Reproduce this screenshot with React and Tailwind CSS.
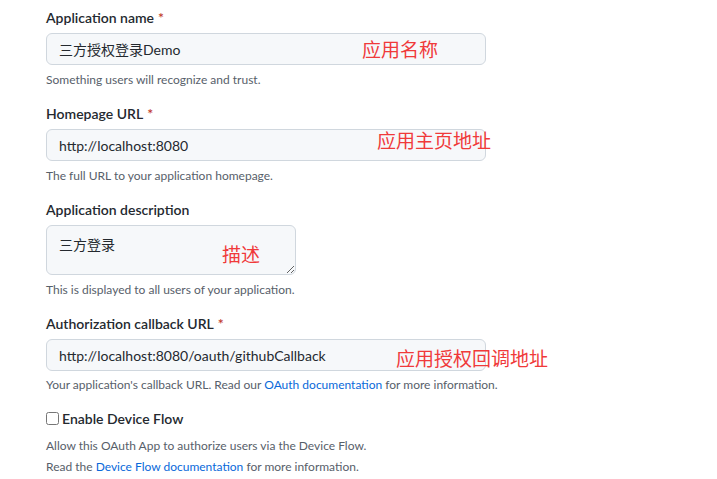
import React from 'react';

const font = { fontFamily: 'Lato, "Noto Sans CJK SC", sans-serif' };

const Label = ({ children, required }) => (
  <label className="block text-sm font-semibold leading-[21px] text-[#24292f]">
    {children}
    {required && <span className="ml-1 text-[#c0392b]">*</span>}
  </label>
);

const Note = ({ children }) => (
  <p className="mt-[6px] text-xs leading-[18px] text-[#57606a]">{children}</p>
);

const Tag = ({ children, className }) => (
  <span className={`absolute whitespace-nowrap text-[19px] leading-none text-[#f03a3a] ${className}`}>
    {children}
  </span>
);

const inputCls =
  'block w-full h-8 px-3 rounded-md border border-[#d0d7de] bg-[#f6f8fa] text-sm text-[#24292f] outline-none';

export default function App() {
  return (
    <div className="min-h-screen bg-white pl-[46px] pt-[7px]" style={font}>
      {/* Application name */}
      <div>
        <Label required>Application name</Label>
        <div className="relative mt-[5px] w-[440px]">
          <input className={inputCls} defaultValue="三方授权登录Demo" readOnly />
          <Tag className="left-[316px] top-[7px]">应用名称</Tag>
        </div>
        <Note>Something users will recognize and trust.</Note>
      </div>

      {/* Homepage URL */}
      <div className="mt-[14px]">
        <Label required>Homepage URL</Label>
        <div className="relative mt-[5px] w-[440px]">
          <input className={inputCls} defaultValue="http://localhost:8080" readOnly />
          <Tag className="left-[331px] top-[2px]">应用主页地址</Tag>
        </div>
        <Note>The full URL to your application homepage.</Note>
      </div>

      {/* Description */}
      <div className="mt-[14px]">
        <Label>Application description</Label>
        <div className="relative mt-[5px] w-[250px]">
          <textarea
            className="block w-full h-[50px] px-3 pt-[9px] pb-1 rounded-md border border-[#d0d7de] bg-[#f6f8fa] text-sm leading-5 text-[#24292f] outline-none"
            defaultValue="三方登录"
            readOnly
          />
          <Tag className="left-[176px] top-[20px]">描述</Tag>
        </div>
        <Note>This is displayed to all users of your application.</Note>
      </div>

      {/* Callback URL */}
      <div className="mt-[14px]">
        <Label required>Authorization callback URL</Label>
        <div className="relative mt-[5px] w-[440px]">
          <input
            className={inputCls}
            defaultValue="http://localhost:8080/oauth/githubCallback"
            readOnly
          />
          <Tag className="left-[350px] top-[10px]">应用授权回调地址</Tag>
        </div>
        <p className="mt-[5px] whitespace-nowrap text-xs leading-[18px] text-[#57606a]">
          Your application's callback URL. Read our{' '}
          <a className="text-[#0969da]">OAuth documentation</a> for more information.
        </p>
      </div>

      {/* Device flow */}
      <div className="mt-[14px]">
        <label className="flex items-center gap-[3px] text-sm font-semibold leading-[21px] text-[#24292f]">
          <input type="checkbox" className="m-0 h-[13px] w-[13px]" />
          Enable Device Flow
        </label>
        <p className="mt-[6px] text-xs leading-[21px] text-[#57606a]">
          Allow this OAuth App to authorize users via the Device Flow.
        </p>
        <p className="text-xs leading-[21px] text-[#57606a]">
          Read the <a className="text-[#0969da]">Device Flow documentation</a> for more information.
        </p>
      </div>
    </div>
  );
}
